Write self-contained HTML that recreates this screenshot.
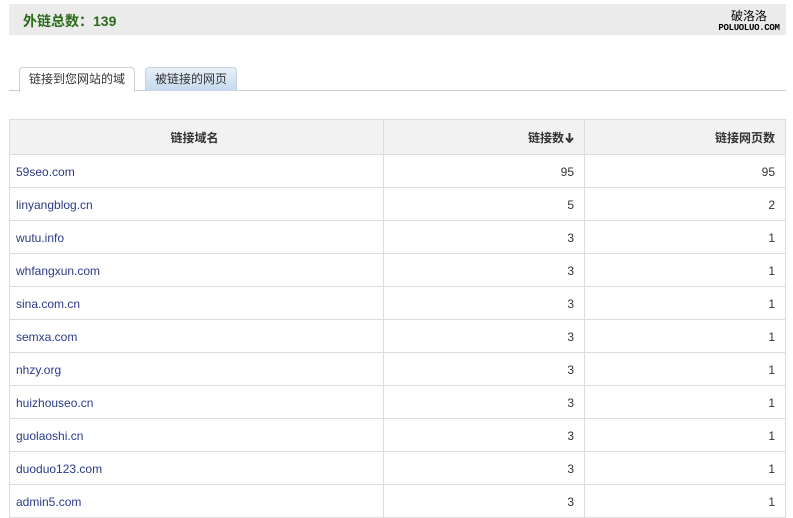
<!DOCTYPE html>
<html><head><meta charset="utf-8"><style>
body{margin:0;background:#fff;width:793px;height:514px;overflow:hidden;font-family:"Liberation Sans","Noto Sans CJK SC",sans-serif;font-size:12px;position:relative}
.bar{position:absolute;left:9px;top:4px;width:777px;height:31px;background:#ebebeb}
.title{position:absolute;left:23px;top:11px;color:#2a6a1a;font-weight:bold;font-size:14px}
.logo{position:absolute;left:711px;top:9px;width:76px;text-align:center;font-size:12px;line-height:14px;color:#000}
.logo small{display:block;font-size:9px;font-weight:bold;font-family:"Liberation Mono",monospace;line-height:10px;letter-spacing:-0.3px}
.line{position:absolute;left:9px;top:90px;width:777px;height:1px;background:#c3cfd8}
.tab{position:absolute;top:67px;height:23px;border:1px solid #c6d2dc;border-bottom:none;border-radius:4px 4px 0 0;line-height:22px;text-align:center;font-size:12px;color:#333}
.t1{left:19px;width:114px;background:#fff;height:24px}
.t2{left:145px;width:90px;background:linear-gradient(#e8f0f8,#c4d8ee)}
table{position:absolute;left:9px;top:119px;border-collapse:collapse;width:777px}
td,th{border:1px solid #dcdcdc;height:32px;padding:0 10px 0 6px;font-size:12px;color:#333}
th{background:#f2f2f2;height:34px;font-weight:bold}
td{padding-top:2px;height:30px}
td.d{color:#2a3a8a}
.r{text-align:right}
</style></head><body>
<div class="bar"></div>
<div class="title">外链总数：139</div>
<div class="logo">破洛洛<small>POLUOLUO.COM</small></div>
<div class="line"></div>
<div class="tab t1">链接到您网站的域</div>
<div class="tab t2">被链接的网页</div>
<table>
<tr><th style="width:357px">链接域名</th><th class="r" style="width:184px">链接数<svg width="9" height="10" viewBox="0 0 9 10" style="vertical-align:-1px;margin-left:1px"><path d="M4.5 0V7M1 5L4.5 9L8 5" stroke="#333" stroke-width="2" fill="none"/></svg></th><th class="r">链接网页数</th></tr>
<tr><td class="d">59seo.com</td><td class="r">95</td><td class="r">95</td></tr>
<tr><td class="d">linyangblog.cn</td><td class="r">5</td><td class="r">2</td></tr>
<tr><td class="d">wutu.info</td><td class="r">3</td><td class="r">1</td></tr>
<tr><td class="d">whfangxun.com</td><td class="r">3</td><td class="r">1</td></tr>
<tr><td class="d">sina.com.cn</td><td class="r">3</td><td class="r">1</td></tr>
<tr><td class="d">semxa.com</td><td class="r">3</td><td class="r">1</td></tr>
<tr><td class="d">nhzy.org</td><td class="r">3</td><td class="r">1</td></tr>
<tr><td class="d">huizhouseo.cn</td><td class="r">3</td><td class="r">1</td></tr>
<tr><td class="d">guolaoshi.cn</td><td class="r">3</td><td class="r">1</td></tr>
<tr><td class="d">duoduo123.com</td><td class="r">3</td><td class="r">1</td></tr>
<tr><td class="d">admin5.com</td><td class="r">3</td><td class="r">1</td></tr>
</table>
</body></html>
